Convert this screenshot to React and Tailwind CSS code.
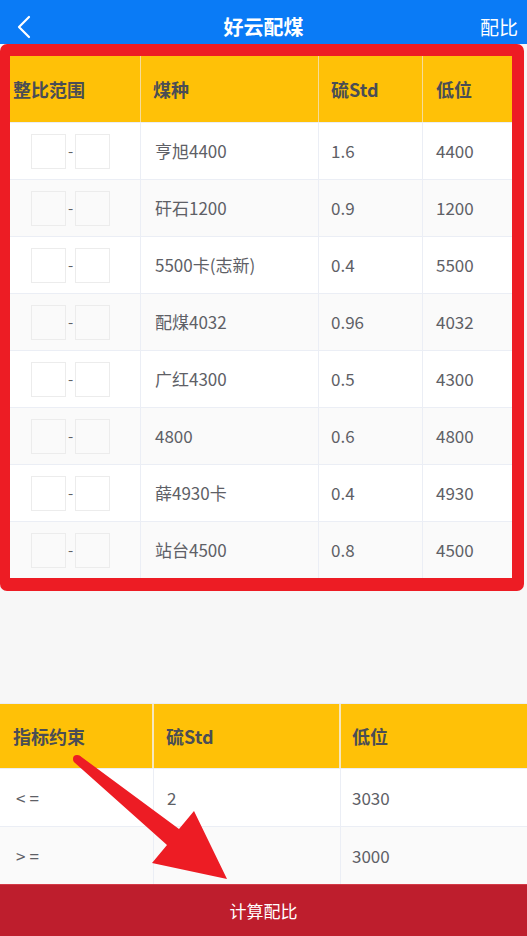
import React from "react";

const coals = [
  { name: "亨旭4400", s: "1.6", low: "4400" },
  { name: "矸石1200", s: "0.9", low: "1200" },
  { name: "5500卡(志新)", s: "0.4", low: "5500" },
  { name: "配煤4032", s: "0.96", low: "4032" },
  { name: "广红4300", s: "0.5", low: "4300" },
  { name: "4800", s: "0.6", low: "4800" },
  { name: "薛4930卡", s: "0.4", low: "4930" },
  { name: "站台4500", s: "0.8", low: "4500" },
];

const limits = [
  { op: "<=", s: "2", low: "3030" },
  { op: ">=", s: "2", low: "3000" },
];

const font = { fontFamily: '"Noto Sans CJK SC", "Noto Sans", sans-serif' };

function RangeInputs() {
  return (
    <div className="flex items-center pl-[21px]">
      <div className="w-[35px] h-[35px] border border-[#ececec]" />
      <span className="w-[9px] text-center text-[15px] text-[#606266]">-</span>
      <div className="w-[35px] h-[35px] border border-[#ececec]" />
    </div>
  );
}

export default function App() {
  return (
    <div
      className="relative w-[527px] h-[936px] overflow-hidden bg-[#f7f7f7] flex flex-col"
      style={font}
    >
      {/* top bar */}
      <div className="h-[44px] shrink-0 bg-[#0a7bf6] grid grid-cols-[60px_1fr_60px] items-center pt-[10px] text-white">
        <div className="pl-[16px] flex items-center">
          <svg width="16" height="24" viewBox="0 0 16 24" fill="none">
            <path d="M13 2 L3 12 L13 22" stroke="white" strokeWidth="2.2" strokeLinecap="round" strokeLinejoin="round" />
          </svg>
        </div>
        <div className="text-center text-[20px] font-bold">好云配煤</div>
        <div className="text-right pr-[9px] text-[19px]">配比</div>
      </div>

      {/* coal table, highlighted */}
      <div className="w-[524px] shrink-0 border-[#ed1c24] border-t-[12px] border-l-[10px] border-r-[12px] border-b-[13px] rounded-[7px] bg-white">
        <div className="flex h-[66px] bg-[#ffc107] text-[18px] font-bold text-[#4a4d55]">
          <div className="w-[131px] border-r border-[#f6dc98] flex items-center pl-[3px]">整比范围</div>
          <div className="w-[178px] border-r border-[#f6dc98] flex items-center pl-[12px]">煤种</div>
          <div className="w-[104px] border-r border-[#f6dc98] flex items-center pl-[12px]">硫Std</div>
          <div className="w-[89px] flex items-center pl-[13px]">低位</div>
        </div>
        {coals.map((c, i) => (
          <div
            key={c.name}
            className={`flex h-[57px] border-t border-[#ebeef5] text-[17px] text-[#5e6066] ${i % 2 ? "bg-[#fafafa]" : "bg-white"}`}
          >
            <div className="w-[131px] border-r border-[#ebeef5] flex items-center">
              <RangeInputs />
            </div>
            <div className="w-[178px] border-r border-[#ebeef5] flex items-center pl-[14px]">{c.name}</div>
            <div className="w-[104px] border-r border-[#ebeef5] flex items-center pl-[12px]">{c.s}</div>
            <div className="w-[89px] flex items-center pl-[13px]">{c.low}</div>
          </div>
        ))}
      </div>

      {/* constraint table */}
      <div className="mt-auto border-t border-[#ebeef5]">
        <div className="flex h-[64px] bg-[#ffc107] text-[18px] font-bold text-[#4a4d55]">
          <div className="w-[154px] border-r-2 border-[#f6e7bd] flex items-center pl-[13px]">指标约束</div>
          <div className="w-[187px] border-r-2 border-[#f6e7bd] flex items-center pl-[12px]">硫Std</div>
          <div className="w-[186px] flex items-center pl-[11px]">低位</div>
        </div>
        {limits.map((l, i) => (
          <div
            key={l.op}
            className={`flex h-[58px] border-t border-[#ebeef5] text-[17px] text-[#5e6066] ${i % 2 ? "bg-[#fafafa]" : "bg-white"}`}
          >
            <div className="w-[154px] border-r border-[#ebeef5] flex items-center pl-[16px] tracking-[4px]">{l.op}</div>
            <div className="w-[187px] border-r border-[#ebeef5] flex items-center pl-[13px]">{l.s}</div>
            <div className="w-[186px] flex items-center pl-[11px]">{l.low}</div>
          </div>
        ))}
      </div>

      <button className="h-[52px] shrink-0 bg-[#be1e2d] border-t border-[#d33a47] text-white text-[17px]">
        计算配比
      </button>

      {/* annotation arrow */}
      <svg className="absolute left-0 top-0 pointer-events-none" width="527" height="936" viewBox="0 0 527 936">
        <circle cx="77" cy="759" r="4" fill="#ed1c24" />
        <polygon
          points="79.5,755.5 179,829 194,811 227,879 152,863 167,845 74.5,762.5"
          fill="#ed1c24"
        />
      </svg>
    </div>
  );
}
